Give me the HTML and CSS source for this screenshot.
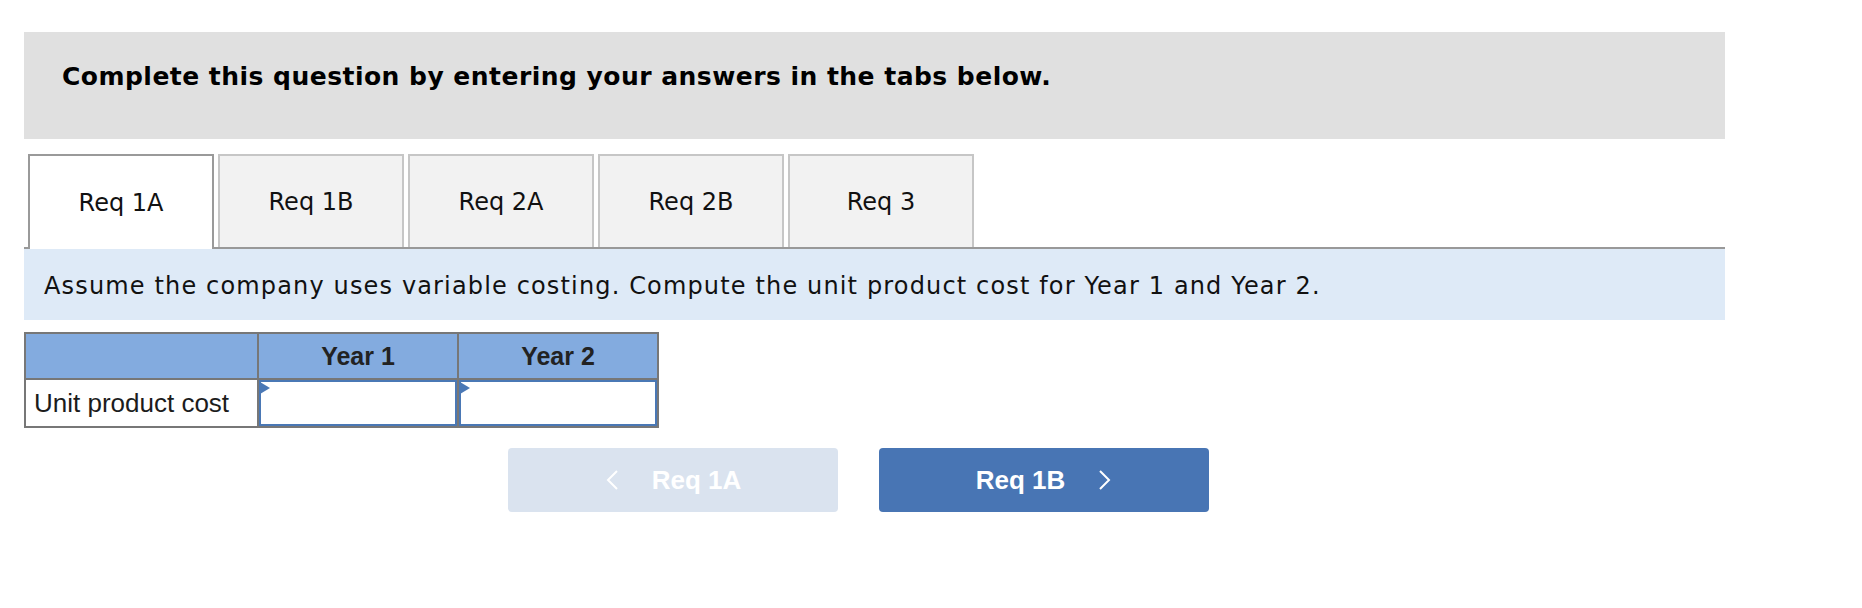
FILE: index.html
```html
<!DOCTYPE html>
<html lang="en">
<head>
<meta charset="UTF-8">
<meta name="viewport" content="width=device-width, initial-scale=1.0">
<title>Unit product cost</title>
<link rel="stylesheet" href="styles.css">
</head>
<body>
<div class="page">
  <div class="prompt">Complete this question by entering your answers in the tabs below.</div>

  <div class="tabs">
    <div class="tab active">Req 1A</div>
    <div class="tab">Req 1B</div>
    <div class="tab">Req 2A</div>
    <div class="tab">Req 2B</div>
    <div class="tab">Req 3</div>
  </div>

  <div class="instruction">Assume the company uses variable costing. Compute the unit product cost for Year 1 and Year 2.</div>

  <table class="grid">
    <colgroup>
      <col class="col-label">
      <col class="col-year">
      <col class="col-year">
    </colgroup>
    <tr class="head">
      <th></th>
      <th>Year 1</th>
      <th>Year 2</th>
    </tr>
    <tr>
      <td class="label">Unit product cost</td>
      <td class="entry"><span class="marker"></span><input type="text"></td>
      <td class="entry"><span class="marker"></span><input type="text"></td>
    </tr>
  </table>

  <div class="nav">
    <button class="nav-btn prev">
      <svg width="14" height="22" viewBox="0 0 14 22"><polyline points="12,2 3,11 12,20" fill="none" stroke="#fff" stroke-width="2"/></svg>
      <span>Req 1A</span>
    </button>
    <button class="nav-btn next">
      <span>Req 1B</span>
      <svg width="14" height="22" viewBox="0 0 14 22"><polyline points="2,2 11,11 2,20" fill="none" stroke="#fff" stroke-width="2"/></svg>
    </button>
  </div>
</div>
</body>
</html>
```

FILE: styles.css
```css
  body {
    margin: 0;
    padding: 0;
    background: #fff;
    font-family: "DejaVu Sans", Verdana, sans-serif;
    color: #000;
  }
  .page {
    width: 1701px;
    margin-left: 24px;
    padding-top: 32px;
  }
  .prompt {
    box-sizing: border-box;
    height: 107px;
    background-color: #e0e0e0;
    padding: 30px 0 0 38px;
    font-size: 25px;
    font-weight: bold;
    letter-spacing: 0.47px;
  }

  .tabs {
    display: flex;
    gap: 4px;
    margin-top: 15px;
    padding-left: 4px;
    height: 93px;
    border-bottom: 2px solid #999;
  }
  .tab {
    box-sizing: border-box;
    width: 186px;
    height: 93px;
    background-color: #f2f2f2;
    border: 2px solid #c6c6c6;
    border-bottom: none;
    display: flex;
    align-items: center;
    justify-content: center;
    font-size: 24px;
    color: #111;
  }
  .tab.active {
    height: 95px;
    margin-bottom: -2px;
    background-color: #fff;
    border-color: #9a9a9a;
  }

  .instruction {
    box-sizing: border-box;
    height: 71px;
    background-color: #deeaf7;
    padding: 23px 20px 0;
    font-size: 24px;
    letter-spacing: 1.15px;
    color: #111;
  }

  .grid {
    margin-top: 12px;
    border-collapse: collapse;
    table-layout: fixed;
    font-family: "Liberation Sans", Arial, sans-serif;
    font-size: 26px;
    color: #222;
  }
  .col-label { width: 233px; }
  .col-year { width: 200px; }
  .grid th, .grid td {
    border: 2px solid #777;
    padding: 0;
  }
  .grid .head th {
    height: 44px;
    background-color: #83abdf;
    font-size: 25px;
    font-weight: bold;
    text-align: center;
  }
  .grid .label {
    height: 46px;
    padding-left: 8px;
    text-align: left;
    color: #1c1c1c;
  }
  .grid .entry {
    position: relative;
  }
  .entry input {
    display: block;
    box-sizing: border-box;
    width: 100%;
    height: 46px;
    margin: 0;
    border: 2px solid #4a78b5;
    background: #fff;
    outline: none;
    font-size: 24px;
  }
  .marker {
    position: absolute;
    left: 1px;
    top: 2px;
    width: 0;
    height: 0;
    border-top: 6px solid transparent;
    border-bottom: 6px solid transparent;
    border-left: 10px solid #4a78b5;
  }

  .nav {
    display: flex;
    gap: 41px;
    margin-top: 20px;
    padding-left: 484px;
  }
  .nav-btn {
    width: 330px;
    height: 64px;
    border: none;
    border-radius: 4px;
    display: flex;
    align-items: center;
    justify-content: center;
    gap: 33px;
    font-family: "Liberation Sans", Arial, sans-serif;
    font-size: 26px;
    font-weight: bold;
    color: #fff;
    cursor: pointer;
  }
  .nav-btn.prev {
    background-color: #dae3ef;
  }
  .nav-btn.next {
    background-color: #4875b4;
  }
```
